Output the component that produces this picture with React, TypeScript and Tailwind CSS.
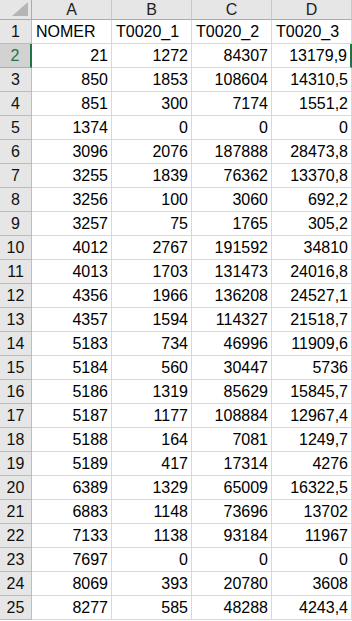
const rows: (string | number)[][] = [
  ["NOMER", "T0020_1", "T0020_2", "T0020_3"],
  [21, 1272, 84307, "13179,9"],
  [850, 1853, 108604, "14310,5"],
  [851, 300, 7174, "1551,2"],
  [1374, 0, 0, 0],
  [3096, 2076, 187888, "28473,8"],
  [3255, 1839, 76362, "13370,8"],
  [3256, 100, 3060, "692,2"],
  [3257, 75, 1765, "305,2"],
  [4012, 2767, 191592, 34810],
  [4013, 1703, 131473, "24016,8"],
  [4356, 1966, 136208, "24527,1"],
  [4357, 1594, 114327, "21518,7"],
  [5183, 734, 46996, "11909,6"],
  [5184, 560, 30447, 5736],
  [5186, 1319, 85629, "15845,7"],
  [5187, 1177, 108884, "12967,4"],
  [5188, 164, 7081, "1249,7"],
  [5189, 417, 17314, 4276],
  [6389, 1329, 65009, "16322,5"],
  [6883, 1148, 73696, 13702],
  [7133, 1138, 93184, 11967],
  [7697, 0, 0, 0],
  [8069, 393, 20780, 3608],
  [8277, 585, 48288, "4243,4"],
];

const cols = ["A", "B", "C", "D"];

export default function App() {
  return (
    <div
      className="w-[352px] h-[621px] overflow-hidden bg-white text-[16px] text-black"
      style={{ fontFamily: '"Liberation Sans", Arial, sans-serif' }}
    >
      <div className="grid grid-cols-[32px_80px_80px_80px_80px] auto-rows-[24px] grid-rows-[20px]">
        {/* corner */}
        <div className="h-[20px] bg-[#e6e6e6] border-r border-b border-[#ababab] flex items-end justify-end pr-[3px] pb-[3px]">
          <svg width="16" height="14" viewBox="0 0 16 14">
            <polygon points="16,0 16,14 0,14" fill="#b5b5b5" />
          </svg>
        </div>
        {cols.map((c) => (
          <div
            key={c}
            className="h-[20px] bg-[#e6e6e6] border-r border-b border-r-[#c8c8c8] border-b-[#ababab] flex items-center justify-center text-[#222] leading-none"
          >
            {c}
          </div>
        ))}

        {rows.map((r, i) => {
          const n = i + 1;
          const active = n === 2;
          return [
            <div
              key={`h${n}`}
              className={
                active
                  ? "bg-[#d2d2d2] text-[#217346] border-b border-[#ababab] border-r-2 border-r-[#217346] flex items-center justify-center leading-none"
                  : "bg-[#e6e6e6] text-[#111] border-b border-r border-[#bdbdbd] flex items-center justify-center leading-none"
              }
            >
              {n}
            </div>,
            ...r.map((v, j) => {
              const text = typeof v === "string" && isNaN(Number(v.replace(",", ".")));
              const edge = active && j === 3;
              return (
                <div
                  key={`c${n}-${j}`}
                  className={
                    (text ? "justify-start pl-[4px] " : "justify-end pr-[3px] ") +
                    (edge ? "border-r-2 border-r-[#217346] " : "border-r border-r-[#d9d9d9] ") +
                    "border-b border-b-[#d9d9d9] flex items-center leading-none whitespace-nowrap overflow-hidden"
                  }
                >
                  {v}
                </div>
              );
            }),
          ];
        })}
      </div>
    </div>
  );
}
